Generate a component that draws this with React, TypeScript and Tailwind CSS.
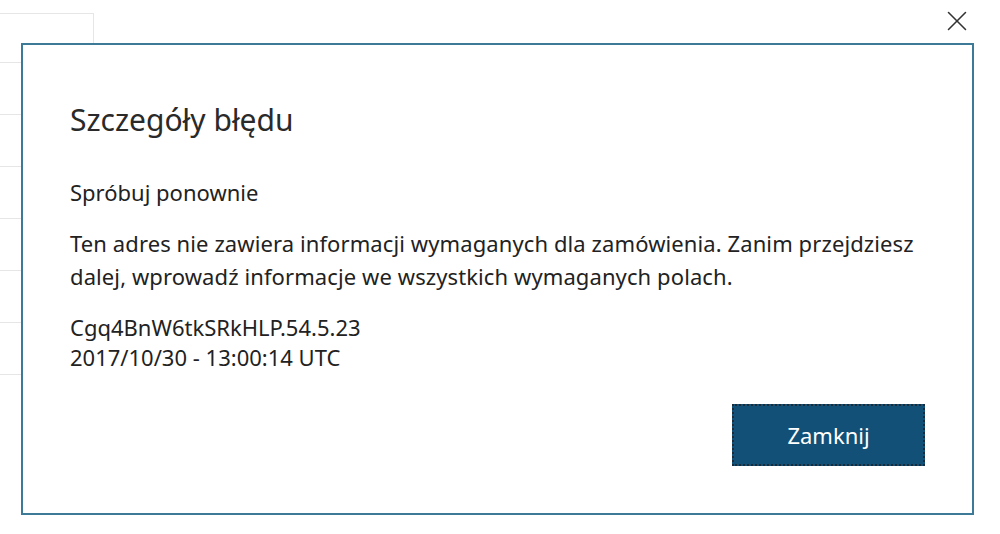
import { X } from 'lucide-react';

const rows = [0, 1, 2, 3, 4, 5, 6];

export default function App() {
    return (
        <div className="relative w-[1000px] h-[534px] overflow-hidden bg-white" style={{ fontFamily: '"Noto Sans", "Open Sans", sans-serif' }}>
            {/* Page behind the dialog */}
            <div className="pt-[13px]">
                <div className="w-[94px] h-[49px] border-t border-r border-[#e6e6e6]"></div>
                <div className="w-[60px]">
                    {rows.map((r) => (
                        <div key={r} className="h-[52px] border-t border-[#e6e6e6]"></div>
                    ))}
                </div>
            </div>

            {/* Close */}
            <button className="absolute left-[940px] top-[4px] w-[34px] h-[34px] flex items-center justify-center text-[#333]">
                <X className="w-[34px] h-[34px]" strokeWidth={1.1} />
            </button>

            {/* Dialog */}
            <div className="absolute left-[21px] top-[43px] w-[953px] h-[472px] border-2 border-[#3d7a98] bg-white px-[47px] pt-[56px] text-[#222]">
                <h1 className="text-[30px] leading-[38px] font-normal text-[#2a2a2a]">Szczegóły błędu</h1>
                <p className="mt-[38px] text-[22px] leading-[30px]">Spróbuj ponownie</p>
                <p className="mt-[20px] text-[22px] leading-[33px] tracking-[0.1px]">
                    Ten adres nie zawiera informacji wymaganych dla zamówienia. Zanim przejdziesz dalej, wprowadź informacje we wszystkich wymaganych polach.
                </p>
                <div className="mt-[19px] text-[22px] leading-[30px]">
                    <p>Cgq4BnW6tkSRkHLP.54.5.23</p>
                    <p>2017/10/30 - 13:00:14 UTC</p>
                </div>
                <div className="mt-[32px] flex justify-end">
                    <button className="w-[193px] h-[62px] bg-[#135078] text-white text-[22px] outline-2 outline-dotted outline-[#1d2b36] -outline-offset-2">
                        Zamknij
                    </button>
                </div>
            </div>
        </div>
    );
}
